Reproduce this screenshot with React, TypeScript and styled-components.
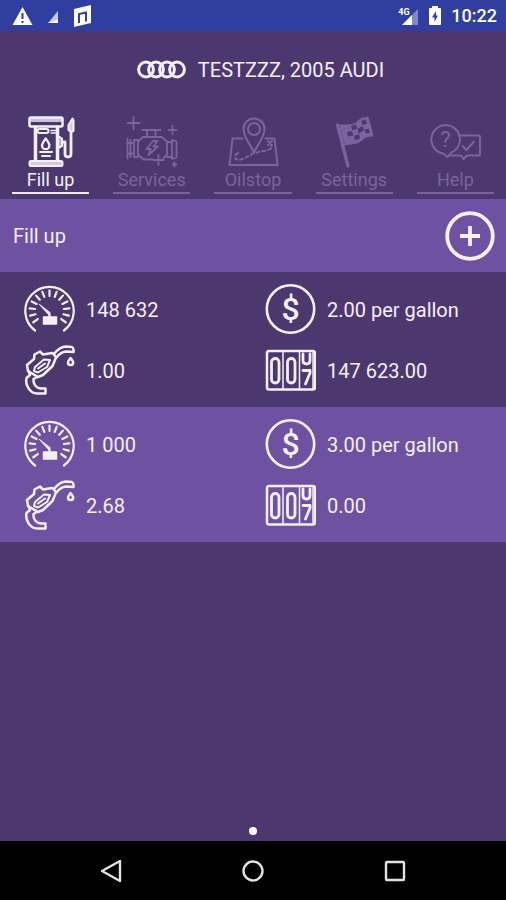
import React, { useState } from "react";
import styled, { createGlobalStyle } from "styled-components";

const GlobalStyle = createGlobalStyle`
  * { box-sizing: border-box; }
  body {
    margin: 0;
    background: #4c386f;
    color: #f4f0fa;
    font-family: Roboto, "Liberation Sans", sans-serif;
    font-size: 20px;
    line-height: 24px;
  }
  button { font: inherit; color: inherit; background: none; border: 0; padding: 0; margin: 0; cursor: pointer; }
  svg { display: block; flex: none; }
`;

const Screen = styled.div`
  min-height: 100vh;
  display: flex;
  flex-direction: column;
`;

const StatusBar = styled.div`
  height: 32px;
  padding: 0 9px 0 12px;
  display: flex;
  align-items: center;
  justify-content: space-between;
  background: #303f9f;
  border-bottom: 1px solid #46377f;
  color: #fff;
`;

const StatusGroup = styled.div<{ $gap: number }>`
  display: flex;
  align-items: center;
  gap: ${(p) => p.$gap}px;
`;

const Clock = styled.time`
  font-size: 18px;
  font-weight: 500;
`;

const Header = styled.header`
  height: 75px;
  padding-left: 14px;
  display: flex;
  align-items: center;
  justify-content: center;
  gap: 12px;
`;

const Title = styled.h1`
  margin: 0;
  font-size: 20px;
  font-weight: 400;
`;

const Tabs = styled.nav`
  height: 92px;
  padding: 9px 0 7px;
  display: grid;
  grid-template-columns: repeat(5, 1fr);
`;

const Tab = styled.button<{ $active: boolean }>`
  && {
    margin: 0 12px;
    display: flex;
    flex-direction: column;
    align-items: center;
    border-bottom: 2px solid ${(p) => (p.$active ? "#eee8f6" : "#7a639f")};
    color: ${(p) => (p.$active ? "#f4f0fa" : "#7a639f")};
    font-size: 18px;
    line-height: 24px;
    white-space: nowrap;
  }
`;

const SectionBar = styled.div`
  height: 73px;
  padding: 0 11px 0 13px;
  display: flex;
  align-items: center;
  justify-content: space-between;
  background: #6e52a1;
`;

const SectionTitle = styled.h2`
  margin: 0;
  font-size: 20px;
  font-weight: 400;
`;

const Records = styled.ul`
  margin: 0;
  padding: 0;
  list-style: none;
`;

const Record = styled.li`
  padding: 7px 12px 6px;
  display: grid;
  grid-template-columns: 1fr 1fr;
  &:nth-child(even) { background: #6e52a1; }
`;

const Field = styled.div`
  height: 61px;
  padding-left: 12px;
  display: flex;
  align-items: center;
  gap: 11px;
  white-space: nowrap;
`;

const PageDots = styled.div`
  margin-top: auto;
  padding-bottom: 6px;
  display: flex;
  justify-content: center;
`;

const Dot = styled.span`
  width: 8px;
  height: 8px;
  border-radius: 50%;
  background: #fff;
`;

const NavBar = styled.nav`
  height: 59px;
  display: flex;
  justify-content: center;
  background: #000;
  color: #e2e2e2;
`;

const NavButton = styled.button`
  width: 142px;
  display: flex;
  align-items: center;
  justify-content: center;
`;

const SvgText = styled.text`
  font-family: Roboto, "Liberation Sans", sans-serif;
  fill: currentColor;
  stroke: none;
  text-anchor: middle;
`;

type IconProps = { w?: number; h?: number; sw?: number; children: React.ReactNode };
const Icon = ({ w = 52, h = 52, sw = 2, children }: IconProps) => (
  <svg
    width={w}
    height={h}
    viewBox={`0 0 ${w} ${h}`}
    fill="none"
    stroke="currentColor"
    strokeWidth={sw}
    strokeLinejoin="round"
    strokeLinecap="round"
    aria-hidden="true"
  >
    {children}
  </svg>
);

const PumpIcon = () => (
  <Icon>
    <rect x="4.5" y="1.500" width="33" height="9" rx="1.5" strokeWidth="2.500" />
    <path d="M7 4H35" strokeWidth="4" opacity=".75" />
    <path d="M10.500 11V44M32.500 11V44" strokeWidth="3.500" />
    <rect x="12.500" y="13" width="11" height="4" rx="2" />
    <path d="M26 14.500H31M26 17H31" strokeWidth="1.500" />
    <path d="M20.700 22.500C18.500 25.500 17 27.500 17 29.500A3.700 3.700 0 0 0 24.400 29.500C24.400 27.500 23 25.500 20.700 22.500Z" strokeWidth="2.300" />
    <path d="M15 36H27M17 40H25" />
    <rect x="4.500" y="45" width="33" height="5" rx="1.500" fill="currentColor" fillOpacity=".8" />
    <path d="M33 20L37 22.500V30L33 32" fill="currentColor" fillOpacity=".6" />
    <path d="M37 26H40V38Q40 41 43 41T46 38V17" strokeWidth="2.800" />
    <path d="M43.500 9L47.500 2.500L48.500 4V15L46 16L43.500 14Z" fill="currentColor" fillOpacity=".8" />
  </Icon>
);

const EngineIcon = () => (
  <Icon sw={1.8}>
    <path d="M7.500 1V13M1.500 7H13.500M46.500 10V18M42.500 14H50.500M32.500 39V49M27.500 44H37.500M48.500 46.500V50.500M46.500 48.500H50.500" />
    <path d="M16.500 14H34.500M21 14V20.500M29.500 14V20.500" />
    <path d="M27 43.500H17.500L12 38.500V26L17 21H35.500L41 25.500V38.500L37.500 42" />
    <path d="M1.500 22.500V42.500M4.500 24V41M1.500 27H8M1.500 37.500H8M8 24H12V41H8Z" />
    <path d="M41 26H46V41H41M46 24L50.500 25.500V41.500L46 43Z" />
    <path d="M27 25L20.500 33H25L22.500 39L32 30.500H27.500L31.500 25Z" />
  </Icon>
);

const MapIcon = () => (
  <Icon>
    <path d="M15.500 22.500H5.500L2.500 49H50.500L47.500 22.500H38.500" />
    <path d="M27 36.500C24 29 16.500 22 16.500 13A10.500 10.500 0 0 1 37.500 13C37.500 22 30 29 27 36.500Z" />
    <circle cx="27" cy="13" r="6" />
    <path d="M11 37L8.500 39V43L12 44L17 42.500L26 37.500L34 35.500L40 34.500L45 32L44 29" strokeDasharray="3 3" />
    <path d="M41 25L45 29M45 25L41 29" />
  </Icon>
);

const FlagIcon = () => (
  <Icon>
    <path d="M9.500 9L20 50" strokeWidth="3.200" />
    <path
      d="M12 9C19 9 26 10 30 5C33 2 36 2 40 1L45 20C40 20 37 21 34 24C29 29 23 27 17 29Z"
      fill="currentColor"
      strokeWidth="1"
    />
    <g fill="#4c386f" stroke="none">
      <path d="M23 10L28 8.500L29 12.500L24.500 14.500Z" />
      <path d="M33.500 5L37.500 3.500L39 7.500L34.500 9Z" />
      <path d="M29.500 13L34.500 10L36 14L31 17.500Z" />
      <path d="M19 16L24 15L25.500 19.500L20 20.500Z" />
      <path d="M26 20L31 18L32 22.500L27 24.500Z" />
      <path d="M36.500 14L40.500 12.500L42 16.500L38 17.500Z" />
    </g>
  </Icon>
);

const HelpIcon = () => (
  <Icon sw={2}>
    <path d="M14 37.500A14.300 14.300 0 1 1 22.500 36.500L18.500 41Z" />
    <path d="M30.500 19.500H49.500Q51 19.500 51 21V38Q51 39.500 49.500 39.500H38L34.500 43L32 39.500H22" />
    <path d="M33.500 30L37.500 34L45 25.500" />
    <SvgText x="16.500" y="31" fontSize="22">?</SvgText>
  </Icon>
);

const gaugeTicks = Array.from({ length: 13 }, (_, i) => -126 + i * 21);
const GaugeIcon = () => (
  <Icon w={51} h={51} sw={2.200}>
    <path d="M11 46.500A24.200 24.200 0 1 1 40 46.500" />
    {gaugeTicks.map((a) => (
      <path key={a} d="M25.500 6.500V12" transform={`rotate(${a} 25.500 26.500)`} />
    ))}
    <path d="M15.500 20.500L24.500 30.500L26 29Z" fill="currentColor" strokeWidth="1" />
    <path d="M25.500 30V33" />
    <rect x="19.500" y="33" width="13" height="7" fill="currentColor" strokeWidth="1.500" />
  </Icon>
);

const NozzleIcon = () => (
  <Icon w={51} h={51} sw={2.500}>
    <path d="M30 9C34 4 38 1.500 42 1.500L48 2Q50 3 49.500 7L42 6.500C38 7 35 9 32.500 12.500" />
    <path d="M10 14L10.500 9.500L16 6.500L19 9.500L25 8.500L28.500 8L32 12L31 15L28.500 21L19 30L14 32L4 26L3 20Z" />
    <path d="M11 22L20 14.500L26 15L23 22L14 27.500L10 26Z" strokeWidth="2" />
    <path d="M14 23.500L21 18.500" strokeWidth="2" />
    <path d="M4.500 26L6 30L2.500 33C1 40 6 48.500 13 48.500H21.500V43.500H17C12 43 9 39 9.500 34L13 32" />
    <path d="M46.500 13C44.500 15.500 44 16.500 44 17.500A2.600 2.600 0 0 0 49.200 17.500C49.200 16.500 48.500 15.500 46.500 13Z" />
  </Icon>
);

const DollarIcon = () => (
  <Icon w={51} h={51} sw={2.600}>
    <circle cx="25.500" cy="25" r="23.700" />
    <SvgText x="25.500" y="35.500" fontSize="32" fontWeight="500">$</SvgText>
  </Icon>
);

const OdometerIcon = () => (
  <Icon w={51} h={51}>
    <rect x="2" y="6" width="48" height="38.500" rx="2" strokeWidth="2.500" />
    <path d="M18 6V44M34.500 6V44M48 6V44" strokeWidth="1.500" />
    <rect x="6.500" y="13.500" width="7.500" height="24.500" rx="3.700" strokeWidth="2.800" />
    <rect x="22.500" y="13.500" width="7.500" height="24.500" rx="3.700" strokeWidth="2.800" />
    <path d="M38 9V15.500Q38 19 41.500 19T45 15.500V9M38 25.500H45V28L40.500 39" strokeWidth="2.800" />
  </Icon>
);

const RingsIcon = () => (
  <Icon w={50} h={20} sw={3}>
    {[10, 20, 31, 41].map((x) => (
      <circle key={x} cx={x} cy="9.500" r="7.400" />
    ))}
  </Icon>
);

const PlusIcon = () => (
  <Icon w={50} h={50} sw={3.800}>
    <circle cx="25" cy="25" r="22.800" />
    <path d="M25 15V35M15 25H35" strokeLinecap="butt" />
  </Icon>
);

const tabs = [
  { label: "Fill up", icon: <PumpIcon /> },
  { label: "Services", icon: <EngineIcon /> },
  { label: "Oilstop", icon: <MapIcon /> },
  { label: "Settings", icon: <FlagIcon /> },
  { label: "Help", icon: <HelpIcon /> },
];

const records = [
  { odometer: "148 632", price: "2.00 per gallon", volume: "1.00", distance: "147 623.00" },
  { odometer: "1 000", price: "3.00 per gallon", volume: "2.68", distance: "0.00" },
];

export default function App() {
  const [active, setActive] = useState("Fill up");
  return (
    <Screen>
      <GlobalStyle />
      <StatusBar>
        <StatusGroup $gap={15}>
          <svg width="21" height="22" viewBox="0 0 21 22" aria-hidden="true">
            <path d="M10.500 2L20.500 20H.5Z" fill="#fff" />
            <path d="M10.500 8V14M10.500 16V18" stroke="#303f9f" strokeWidth="2" />
          </svg>
          <svg width="11" height="22" viewBox="0 0 11 22" aria-hidden="true">
            <path d="M10 6V18H0Z" fill="#c3c9e6" />
            <path d="M0 18L10 14.500V18Z" fill="#fff" />
          </svg>
          <svg width="18" height="22" viewBox="0 0 18 22" aria-hidden="true">
            <path d="M0 4L17 0V18L0 22Z" fill="#fff" />
            <path d="M5 18V9L12 7.500V16.500" fill="none" stroke="#303f9f" strokeWidth="2" />
          </svg>
        </StatusGroup>
        <StatusGroup $gap={10}>
          <svg width="22" height="22" viewBox="0 0 22 22" aria-hidden="true">
            <path d="M21 4V20H5Z" fill="#7f89c4" />
            <path d="M15 10V20H5Z" fill="#fff" />
            <SvgText x="7" y="10" fontSize="9" fontWeight="700">4G</SvgText>
          </svg>
          <svg width="12" height="20" viewBox="0 0 12 20" aria-hidden="true">
            <path d="M3 2V0H9V2H11Q12 2 12 3V18Q12 19 11 19H1Q0 19 0 18V3Q0 2 1 2Z" fill="#fff" />
            <path d="M7 5L3 11.500H5.500V16L9 9.500H7Z" fill="#303f9f" />
          </svg>
          <Clock>10:22</Clock>
        </StatusGroup>
      </StatusBar>

      <Header>
        <RingsIcon />
        <Title>TESTZZZ, 2005 AUDI</Title>
      </Header>

      <Tabs>
        {tabs.map((t) => (
          <Tab key={t.label} $active={t.label === active} onClick={() => setActive(t.label)}>
            {t.icon}
            {t.label}
          </Tab>
        ))}
      </Tabs>

      <SectionBar>
        <SectionTitle>Fill up</SectionTitle>
        <button aria-label="Add fill up">
          <PlusIcon />
        </button>
      </SectionBar>

      <Records>
        {records.map((r) => (
          <Record key={r.odometer}>
            <Field><GaugeIcon />{r.odometer}</Field>
            <Field><DollarIcon />{r.price}</Field>
            <Field><NozzleIcon />{r.volume}</Field>
            <Field><OdometerIcon />{r.distance}</Field>
          </Record>
        ))}
      </Records>

      <PageDots><Dot /></PageDots>

      <NavBar>
        <NavButton aria-label="Back">
          <Icon w={24} h={24} sw={2.400}><path d="M21 2V22L3 12Z" /></Icon>
        </NavButton>
        <NavButton aria-label="Home">
          <Icon w={24} h={24} sw={2.400}><circle cx="12" cy="12" r="9.500" /></Icon>
        </NavButton>
        <NavButton aria-label="Recent apps">
          <Icon w={24} h={24} sw={2.400}><rect x="3" y="3" width="18" height="18" rx="1" /></Icon>
        </NavButton>
      </NavBar>
    </Screen>
  );
}
